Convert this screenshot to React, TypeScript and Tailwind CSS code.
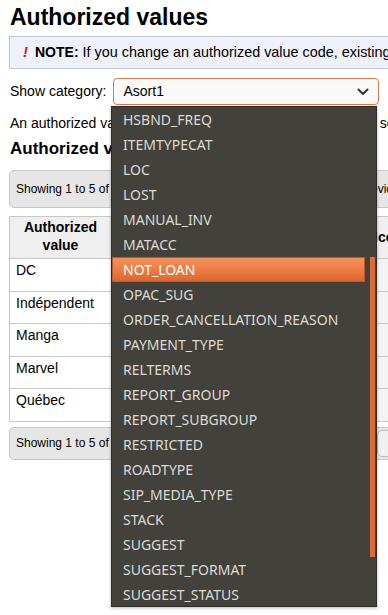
import React from "react";

const options = [
  "HSBND_FREQ",
  "ITEMTYPECAT",
  "LOC",
  "LOST",
  "MANUAL_INV",
  "MATACC",
  "NOT_LOAN",
  "OPAC_SUG",
  "ORDER_CANCELLATION_REASON",
  "PAYMENT_TYPE",
  "RELTERMS",
  "REPORT_GROUP",
  "REPORT_SUBGROUP",
  "RESTRICTED",
  "ROADTYPE",
  "SIP_MEDIA_TYPE",
  "STACK",
  "SUGGEST",
  "SUGGEST_FORMAT",
  "SUGGEST_STATUS",
];

const rows = ["DC", "Indépendent", "Manga", "Marvel", "Québec"];

function Chevron() {
  return (
    <svg width="12" height="8" viewBox="0 0 12 8" fill="none">
      <path d="M1.5 1.5 L6 6 L10.5 1.5" stroke="#333" strokeWidth="2" strokeLinecap="round" strokeLinejoin="round" />
    </svg>
  );
}

export default function App() {
  return (
    <div className="relative h-[615px] w-full overflow-hidden bg-white font-['Liberation_Sans',Arial,sans-serif] text-[14px] text-black">
      <div className="w-[520px] pl-[10px]">
        <h1 className="pt-[3px] text-[23px] font-bold leading-[28px]">Authorized values</h1>

        {/* note banner */}
        <div className="ml-[-1px] mt-[5px] flex h-[33px] items-center whitespace-nowrap border border-[#c3c7d3] bg-[#eef1fa] pl-[13px]">
          <span className="mr-[7px] text-[15px] font-bold italic text-[#d21b1b]">!</span>
          <span className="font-bold">NOTE:</span>
          <span className="ml-[4px] text-[14.4px]">If you change an authorized value code, existing records using it won't be updated.</span>
        </div>

        {/* category select */}
        <div className="mt-[9px] flex h-[27px] items-center">
          <span>Show category:</span>
          <div className="ml-[6px] flex h-[27px] w-[266px] items-center justify-between rounded-[4px] border border-[#e2784a] bg-[#f9f9f9] pl-[10px] pr-[9px]">
            <span>Asort1</span>
            <Chevron />
          </div>
        </div>

        <p className="mt-[10px] whitespace-nowrap leading-[16px]">
          An authorized value category is used to build selection lists seen throughout Koha.
        </p>

        <h3 className="mt-[8px] text-[17px] font-bold leading-[20px]">
          Authorized values for category Asort1:
        </h3>

        {/* top info bar */}
        <div className="ml-[-1px] mt-[11px] flex h-[38px] items-center whitespace-nowrap rounded-[5px] border border-[#c8c8c8] bg-[#e6e6e6] pl-[6px] text-[12px]">
          <span className="w-[343px]">Showing 1 to 5 of 5 entries</span>
          <span>Previous</span>
        </div>

        {/* table */}
        <table className="ml-[-1px] mt-[8px] border-collapse">
          <thead>
            <tr className="h-[42px]">
              <th className="w-[102px] border border-[#c8c8c8] bg-[#efefef] pb-[3px] text-center font-bold leading-[18px]">
                Authorized
                <br />
                value
              </th>
              <th className="w-[262px] border border-[#c8c8c8] bg-[#efefef] font-bold">Description</th>
              <th className="w-[140px] border border-[#c8c8c8] bg-[#efefef] pl-0 text-left font-bold">Icon</th>
            </tr>
          </thead>
          <tbody>
            {rows.map((r) => (
              <tr key={r} className="h-[32.5px]">
                <td className="border border-[#c8c8c8] bg-white px-[6px] pt-[1px] align-top">{r}</td>
                <td className="border border-[#c8c8c8] bg-[#f3f3f3]" />
                <td className="border border-[#c8c8c8] bg-[#f3f3f3]" />
              </tr>
            ))}
          </tbody>
        </table>

        {/* bottom info bar */}
        <div className="ml-[-1px] mt-[5px] flex h-[33px] items-center whitespace-nowrap rounded-[5px] border border-[#c8c8c8] bg-[#e6e6e6] pl-[6px] text-[12px]">
          <span className="w-[361px]">Showing 1 to 5 of 5 entries</span>
          <span className="h-[27px] w-[80px] rounded-[5px] border border-[#bdbdbd] bg-[#f0f0f0]" />
        </div>
      </div>

      {/* open select popup */}
      <div className="absolute left-[111px] top-[106px] h-[501px] w-[266px] border border-[#2e2d2a] bg-[#43413c] font-['Noto_Sans',sans-serif] text-[14px] shadow-[0_1px_3px_rgba(0,0,0,0.3)]">
        {options.map((o) => (
          <div
            key={o}
            className={
              o === "NOT_LOAN"
                ? "mr-[11px] flex h-[25px] items-center border border-[#c4572a] bg-gradient-to-b from-[#f4935b] to-[#e0662e] pl-[10px] text-white"
                : "mr-[11px] flex h-[25px] items-center pl-[11px] text-[#dcdad3]"
            }
          >
            {o}
          </div>
        ))}
        <div className="absolute right-px top-[150px] h-[300px] w-[5px] bg-[#dc6a3a]" />
      </div>
    </div>
  );
}
